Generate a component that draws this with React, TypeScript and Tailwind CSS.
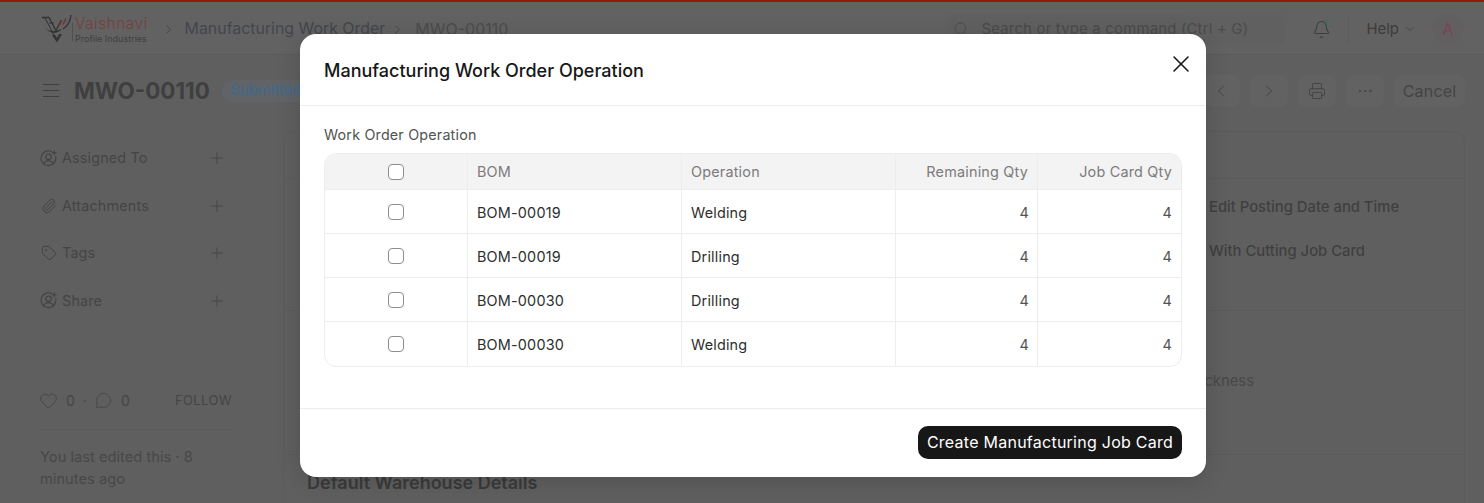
import React from 'react';
import { Bell, ChevronDown, ChevronLeft, ChevronRight, Ellipsis, Heart, MessageCircle, Paperclip, Plus, Printer, Search, Tag, X } from 'lucide-react';

const UserPlusIcon = () => (
  <svg width="17" height="17" viewBox="0 0 16 16" fill="none" stroke="currentColor" strokeWidth="0.95" strokeLinecap="round">
    <path d="M11 1.400A7 7 0 1 0 14.800 6.200" />
    <circle cx="8" cy="6.400" r="2.600" />
    <path d="M3.400 13.200c.7-2 2.500-3 4.600-3s3.900 1 4.600 3" />
    <path d="M13.400 .6v3.800M11.500 2.500h3.800" />
  </svg>
);

const Logo = () => (
  <svg width="31" height="30" viewBox="0 0 31 30" fill="none" className="shrink-0">
    <path d="M0 3.500h7l7 13 5-10" stroke="#333333" strokeWidth="1.300" />
    <path d="M3 4l9 17M7 9l5 0" stroke="#333333" strokeWidth="1" />
    <path d="M29 1c-.5 5-3 11-8 14" stroke="#333333" strokeWidth="1.300" />
    <path d="M20 6l-2.500 5M24 4.500l-3 6" stroke="#6f3535" strokeWidth="1.500" />
    <path d="M3 13c3 5 9 5 17 2-4 5-12 6-17-2z" fill="#333333" />
    <path d="M10 21l5 7.500 5-8.500h-3l-2 4-2-3z" fill="#333333" />
    <path d="M30.500 9v18" stroke="#4a4a4a" strokeWidth="0.800" />
  </svg>
);

const sidebarItems = [
  { label: 'Assigned To', icon: <UserPlusIcon /> },
  { label: 'Attachments', icon: <Paperclip size={16} strokeWidth={1.4} /> },
  { label: 'Tags', icon: <Tag size={16} strokeWidth={1.4} /> },
  { label: 'Share', icon: <UserPlusIcon /> },
];

const rows = [
  { bom: 'BOM-00019', operation: 'Welding' },
  { bom: 'BOM-00019', operation: 'Drilling' },
  { bom: 'BOM-00030', operation: 'Drilling' },
  { bom: 'BOM-00030', operation: 'Welding' },
];

const gridCols = 'grid grid-cols-[142px_214px_214px_142px_1fr]';

const Checkbox = () => (
  <span className="block w-4 h-4 rounded-[4px] border border-[#8e8e8e] bg-white" />
);

export default function App() {
  return (
    <div className="relative w-[1484px] h-[503px] overflow-hidden bg-[#5f5f5f] font-['Inter',sans-serif] text-[#444444]">
      <div className="h-[2px] bg-[#8f1d06]" />
      <header className="h-[53px] flex items-center bg-[#626262] border-b border-[#5b5b5b] pl-[42px] pr-[20px] pt-[2px]">
        <Logo />
        <div className="ml-[2px] flex flex-col">
          <span className="text-[15.5px] leading-[18px] tracking-[0.45px] font-light text-[#763f3f]">Vaishnavi</span>
          <span className="text-[9px] leading-[11px] text-[#404040]">Profile Industries</span>
        </div>
        <ChevronRight size={15} strokeWidth={1.3} className="ml-[13px] text-[#3f3f3f]" />
        <span className="ml-[9px] text-[15.9px] text-[#44464c]">Manufacturing Work Order</span>
        <ChevronRight size={15} strokeWidth={1.3} className="ml-[5px] text-[#3f3f3f]" />
        <span className="ml-[10px] text-base text-[#4c4c4c]">MWO-00110</span>
        <div className="ml-auto w-[337px] h-[32px] rounded-lg bg-[#606060] flex items-center pl-[5px] text-[#4b4b4b]">
          <Search size={16} strokeWidth={1.4} />
          <span className="ml-[13px] text-[14.9px] tracking-[0.2px] whitespace-nowrap">Search or type a command (Ctrl + G)</span>
        </div>
        <div className="relative ml-[27px]">
          <Bell size={19} strokeWidth={1.3} className="text-[#3f3f3f]" />
          <span className="absolute top-0 right-[2px] w-[4px] h-[4px] rounded-full bg-[#3f6f5a]" />
        </div>
        <div className="ml-[17px] w-px h-[27px] bg-[#5b5b5b]" />
        <span className="ml-[18px] text-[14.9px] text-[#3c3c3c]">Help</span>
        <ChevronDown size={14} strokeWidth={1.3} className="ml-[4px] text-[#3f3f3f]" />
        <span className="ml-[15px] w-[32px] h-[32px] rounded-full bg-[#625f60] flex items-center justify-center text-base text-[#7f4058]">A</span>
      </header>

      <div className="h-[71px] flex items-center pl-[43px] pr-[19px]">
        <div className="flex flex-col gap-[5px] w-[16px]">
          <span className="h-px bg-[#3f3f3f]" />
          <span className="h-px bg-[#3f3f3f]" />
          <span className="h-px bg-[#3f3f3f]" />
        </div>
        <h1 className="ml-[15px] text-[22.4px] font-bold text-[#3f3f3f]">MWO-00110</h1>
        <span className="ml-[12px] h-[22px] px-[8px] rounded-full bg-[#616366] flex items-center text-[14.9px] text-[#3f6a92]">Submitted</span>
        <div className="ml-auto flex items-center gap-[10px] text-[#444444]">
          {[<ChevronLeft size={20} strokeWidth={1.2} />, <ChevronRight size={20} strokeWidth={1.2} />, <Printer size={18} strokeWidth={1.3} />, <Ellipsis size={18} strokeWidth={1.3} />].map((icon, index) => (
            <span key={index} className="w-[38px] h-[32px] rounded-lg bg-[#626262] flex items-center justify-center">{icon}</span>
          ))}
          <span className="w-[71px] h-[32px] rounded-lg bg-[#626262] flex items-center justify-center text-base tracking-[0.2px]">Cancel</span>
        </div>
      </div>

      <div className="flex pl-[40px] pr-[19px]">
        <aside className="w-[243px] shrink-0 pt-[21px] pr-[51px] text-[#454545]">
          <div className="flex flex-col gap-[25.5px]">
            {sidebarItems.map((item) => (
              <div key={item.label} className="h-[22px] flex items-center gap-[5px]">
                <span className="w-[17px] flex justify-center text-[#3f3f3f]">{item.icon}</span>
                <span className="text-[14.4px] tracking-[0.15px]">{item.label}</span>
                <Plus size={18} strokeWidth={1.2} className="ml-auto mr-[6px]" />
              </div>
            ))}
          </div>
          <div className="mt-[79px] pb-[18px] border-b border-[#5b5b5b] flex items-center text-sm">
            <Heart size={19} strokeWidth={1.2} className="-ml-[1px]" />
            <span className="ml-[8px]">0</span>
            <span className="ml-[8px]">·</span>
            <MessageCircle size={17} strokeWidth={1.2} className="ml-[8px]" />
            <span className="ml-[9px]">0</span>
            <span className="ml-auto text-[13px] tracking-[0.4px]">FOLLOW</span>
          </div>
          <p className="mt-[16px] text-[14.7px] leading-[22px] text-[#484848]">You last edited this · 8 minutes ago</p>
        </aside>

        <main className="flex-1 h-[400px] mt-[5px] border border-[#5b5b5b] rounded-t-xl">
          <div className="h-[47px] border-b border-[#5b5b5b]" />
          <div className="h-[132px] border-b border-[#5b5b5b] pl-[925px] pt-[17px] text-[14.8px] font-medium text-[#3f3f3f]">
            <p className="h-[44px] leading-[22px] whitespace-nowrap">Edit Posting Date and Time</p>
            <p className="leading-[22px] whitespace-nowrap">With Cutting Job Card</p>
          </div>
          <div className="h-[144px] border-b border-[#5b5b5b] pl-[854px] pt-[59px] text-[14.8px] text-[#484848]">Sheet Thickness</div>
          <h2 className="pl-[23px] pt-[14px] text-lg font-semibold text-[#3a3a3a]">Default Warehouse Details</h2>
        </main>
      </div>

      {/* modal over the dimmed page */}
      <div className="absolute left-[300px] top-[34px] w-[906px] h-[443px] rounded-2xl bg-white shadow-[0_4px_24px_rgba(0,0,0,0.15)] flex flex-col">
        <div className="h-[72px] shrink-0 border-b border-[#ededed] flex items-center justify-between pl-[24px] pr-[11px]">
          <h3 className="mt-[2px] text-lg font-medium text-[#171717]">Manufacturing Work Order Operation</h3>
          <X size={28} strokeWidth={1.3} className="text-[#171717] -mt-[12px]" />
        </div>
        <div className="flex-1 px-[24px] pt-[19px]">
          <p className="h-[28px] text-[14.3px] leading-[20px] tracking-[0.2px] text-[#525252]">Work Order Operation</p>
          <div className="border border-[#ededed] rounded-xl overflow-hidden text-[14.4px] tracking-[0.2px]">
            <div className={`${gridCols} h-[36px] bg-[#f3f3f3] text-[#7c7c7c] border-b border-[#ededed]`}>
              <div className="flex items-center justify-center"><Checkbox /></div>
              <div className="flex items-center px-[9px] border-l border-[#ededed]">BOM</div>
              <div className="flex items-center px-[9px] border-l border-[#ededed]">Operation</div>
              <div className="flex items-center justify-end px-[9px] border-l border-[#ededed]">Remaining Qty</div>
              <div className="flex items-center justify-end px-[9px] border-l border-[#ededed]">Job Card Qty</div>
            </div>
            {rows.map((row, index) => {
              const last = index === rows.length - 1;
              return (
                <div key={index} className={`${gridCols} h-[44px] text-[#2e2e2e] ${last ? '' : 'border-b border-[#ededed]'}`}>
                  <div className="flex items-center justify-center"><Checkbox /></div>
                  <div className={`flex items-center px-[9px] border-l border-[#ededed] ${last ? 'pt-[1px]' : 'pt-[2px]'}`}>{row.bom}</div>
                  <div className={`flex items-center px-[9px] border-l border-[#ededed] ${last ? 'pt-[1px]' : 'pt-[2px]'}`}>{row.operation}</div>
                  <div className={`flex items-center justify-end pl-[9px] pr-[8px] border-l border-[#ededed] text-[#525252] ${last ? 'pt-[1px]' : 'pt-[2px]'}`}>4</div>
                  <div className={`flex items-center justify-end px-[9px] border-l border-[#ededed] text-[#525252] ${last ? 'pt-[1px]' : 'pt-[2px]'}`}>4</div>
                </div>
              );
            })}
          </div>
        </div>
        <div className="h-[69px] shrink-0 border-t border-[#ededed] flex items-center justify-end px-[24px] pb-[2px]">
          <button className="h-[33px] px-[9px] rounded-[10px] bg-[#171717] text-white text-base tracking-[0.25px]">Create Manufacturing Job Card</button>
        </div>
      </div>
    </div>
  );
}
